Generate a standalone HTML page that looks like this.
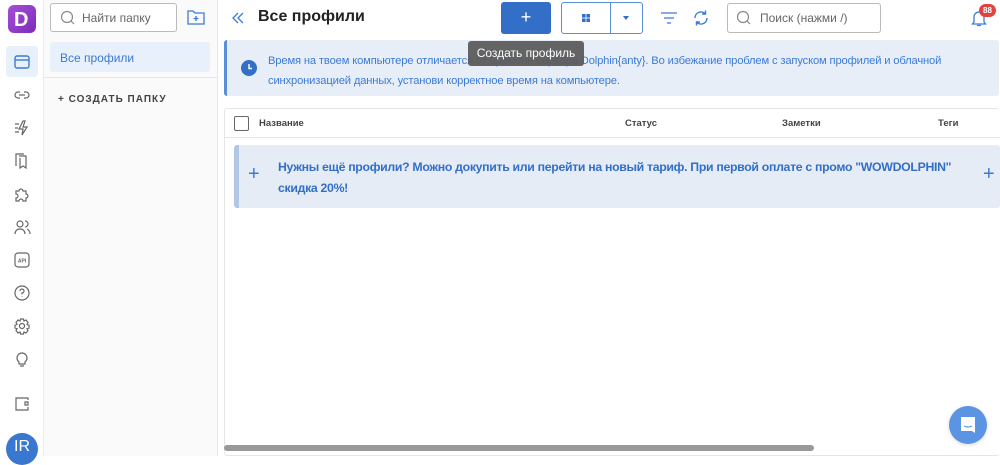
<!DOCTYPE html>
<html><head><meta charset="utf-8"><style>
*{box-sizing:border-box;margin:0;padding:0}
body{width:1000px;height:456px;overflow:hidden;background:#fff;font-family:"Liberation Sans",sans-serif;position:relative;color:#222}
.abs{position:absolute}
.rail{left:0;top:0;width:44px;height:456px;background:#fff;border-right:1px solid #ececec}
.ic{position:absolute;left:12px;width:20px;height:20px}
.panel{left:44px;top:0;width:174px;height:456px;background:#fafafa;border-right:1px solid #e8e8e8}
svg{display:block}
</style></head><body>
<div class="abs rail">
  <div class="abs" style="left:8px;top:5px;width:28px;height:28px;border-radius:6px;background:linear-gradient(135deg,#a64fd8,#7d2cb8)"></div>
  <div class="abs" style="left:14px;top:9px;color:#fff;font-weight:bold;font-size:20px">D</div>
  <div class="abs" style="left:6px;top:46px;width:32px;height:31px;border-radius:4px;background:#e8f0fb"></div>
  <svg class="ic" style="top:52px" viewBox="0 0 20 20"><rect x="3" y="4" width="14" height="12" rx="2" fill="none" stroke="#3b7bd8" stroke-width="1.4"/><line x1="3" y1="8" x2="17" y2="8" stroke="#3b7bd8" stroke-width="1.4"/></svg>
  <svg class="ic" style="top:85px" viewBox="0 0 20 20" fill="none" stroke="#666" stroke-width="1.2"><path d="M8 7H6a3 3 0 0 0 0 6h2M12 7h2a3 3 0 0 1 0 6h-2M7 10h6"/></svg>
  <svg class="ic" style="top:118px" viewBox="0 0 20 20" fill="none" stroke="#666" stroke-width="1.2"><path d="M11 3l-4 8h4l-1 6 5-8h-4l2-6zM3 6h4M3 10h3M3 14h4"/></svg>
  <svg class="ic" style="top:151px" viewBox="0 0 20 20" fill="none" stroke="#666" stroke-width="1.2"><path d="M7 5h7v12l-3-2-3 2V7M4 15V3h8"/></svg>
  <svg class="ic" style="top:184px" viewBox="0 0 20 20" fill="none" stroke="#666" stroke-width="1.2"><path d="M4 7h3a2 2 0 1 1 4 0h3v3a2 2 0 1 1 0 4v3h-3a2 2 0 1 0-4 0H4v-3a2 2 0 1 0 0-4z"/></svg>
  <svg class="ic" style="top:217px" viewBox="0 0 20 20" fill="none" stroke="#666" stroke-width="1.2"><circle cx="8" cy="7" r="3"/><path d="M3 17c0-3 2-5 5-5s5 2 5 5M13 4a3 3 0 0 1 0 6M15 12c2 1 3 3 3 5"/></svg>
  <svg class="ic" style="top:250px" viewBox="0 0 20 20" fill="none" stroke="#666" stroke-width="1.2"><rect x="3" y="3" width="14" height="14" rx="3"/><text x="10" y="12.5" font-size="5" text-anchor="middle" fill="#666" stroke="none" font-family="Liberation Sans" font-weight="bold">API</text></svg>
  <svg class="ic" style="top:283px" viewBox="0 0 20 20" fill="none" stroke="#666" stroke-width="1.2"><circle cx="10" cy="10" r="7"/><path d="M8 8a2 2 0 1 1 2 2v1.5M10 13.5v.5"/></svg>
  <svg class="ic" style="top:316px" viewBox="0 0 20 20" fill="none" stroke="#666" stroke-width="1.2"><circle cx="10" cy="10" r="2.5"/><path d="M8.5 3h3l.5 2 2-1 2 2.5-1 2 2 .5v3l-2 .5 1 2-2 2.5-2-1-.5 2h-3l-.5-2-2 1-2-2.5 1-2-2-.5v-3l2-.5-1-2L6 4l2 1z"/></svg>
  <svg class="ic" style="top:349px" viewBox="0 0 20 20" fill="none" stroke="#666" stroke-width="1.2"><path d="M7 13a5 5 0 1 1 6 0v2H7zM8 17h4"/></svg>
  <svg class="ic" style="top:394px" viewBox="0 0 20 20" fill="none" stroke="#666" stroke-width="1.2"><path d="M16 6V4H4v12h12v-3M16 8h-3v3h3z"/></svg>
  <div class="abs" style="left:6px;top:433px;width:32px;height:32px;border-radius:50%;background:#3a77d0;color:#fff;font-size:16px;text-align:center;line-height:28px">IR</div>
</div>
<div class="abs panel">
  <div class="abs" style="left:6px;top:3px;width:127px;height:29px;border:1px solid #bbb;border-radius:3px;background:#fff"></div>
  <svg class="abs" style="left:16px;top:10px" width="16" height="16" viewBox="0 0 16 16" fill="none" stroke="#888" stroke-width="1.2"><circle cx="7" cy="7" r="5.5"/><path d="M11 11l3 3"/></svg>
  <div class="abs" style="left:38px;top:11px;font-size:12px;color:#666">Найти папку</div>
  <svg class="abs" style="left:143px;top:9px" width="18" height="16" viewBox="0 0 18 16" fill="none" stroke="#3b7bd8" stroke-width="1.3"><path d="M1 2h5l2 2h9v11H1z M9 7v5M6.5 9.5h5"/></svg>
  <div class="abs" style="left:6px;top:42px;width:160px;height:30px;border-radius:3px;background:#e8f0fb"></div>
  <div class="abs" style="left:16px;top:51px;font-size:12px;color:#3b7bd8">Все профили</div>
  <div class="abs" style="left:0;top:77px;width:173px;height:1px;background:#e6e6e6"></div>
  <div class="abs" style="left:14px;top:94px;font-size:10px;color:#444;letter-spacing:1px;font-weight:bold">+ СОЗДАТЬ ПАПКУ</div>
</div>
<!-- header -->
<svg class="abs" style="left:230px;top:10px" width="16" height="16" viewBox="0 0 16 16" fill="none" stroke="#3b7bd8" stroke-width="1.3"><path d="M8 3L3 8l5 5M13 3L8 8l5 5"/></svg>
<div class="abs" style="left:258px;top:8px;font-size:16px;font-weight:bold;color:#222">Все профили</div>
<div class="abs" style="left:501px;top:2px;width:50px;height:32px;background:#336fc7;border-radius:3px;color:#fff;text-align:center;line-height:30px;font-size:18px">+</div>
<div class="abs" style="left:561px;top:2px;width:82px;height:32px;border:1px solid #5a8fd8;border-radius:3px"></div>
<div class="abs" style="left:610px;top:3px;width:1px;height:30px;background:#5a8fd8"></div>
<svg class="abs" style="left:582px;top:14px" width="8" height="8" viewBox="0 0 10 10" fill="#336fc7"><rect x="0" y="0" width="4.5" height="4.5"/><rect x="5.5" y="0" width="4.5" height="4.5"/><rect x="0" y="5.5" width="4.5" height="4.5"/><rect x="5.5" y="5.5" width="4.5" height="4.5"/></svg>
<svg class="abs" style="left:623px;top:16px" width="6" height="4"><path d="M0 0h6L3 4z" fill="#336fc7"/></svg>
<svg class="abs" style="left:660px;top:10px" width="18" height="16" viewBox="0 0 18 16" stroke="#3b7bd8" stroke-width="1.3"><path d="M1 3h16M4 8h10M7 13h4"/></svg>
<svg class="abs" style="left:692px;top:9px" width="18" height="18" viewBox="0 0 18 18" fill="none" stroke="#3b7bd8" stroke-width="1.4"><path d="M3 9a6 6 0 0 1 10.5-4M15 9a6 6 0 0 1-10.5 4M13.5 1.5v3.5H10M4.5 16.5V13H8"/></svg>
<div class="abs" style="left:727px;top:3px;width:154px;height:30px;border:1px solid #bbb;border-radius:3px"></div>
<svg class="abs" style="left:736px;top:10px" width="16" height="16" viewBox="0 0 16 16" fill="none" stroke="#888" stroke-width="1.2"><circle cx="7" cy="7" r="5.5"/><path d="M11 11l3 3"/></svg>
<div class="abs" style="left:760px;top:11px;font-size:12px;color:#666">Поиск (нажми /)</div>
<svg class="abs" style="left:970px;top:9px" width="18" height="18" viewBox="0 0 18 18" fill="none" stroke="#3b7bd8" stroke-width="1.3"><path d="M4 13V8a5 5 0 0 1 10 0v5l1.5 2h-13zM7 16.5h4"/></svg>
<div class="abs" style="left:979px;top:4px;width:17px;height:13px;border-radius:7px;background:#e14343;color:#fff;font-size:8px;font-weight:bold;text-align:center;line-height:13px">88</div>
<!-- alert -->
<div class="abs" style="left:224px;top:40px;width:775px;height:56px;background:#e8eef8;border-left:3px solid #5a8fd8;border-radius:3px"></div>
<svg class="abs" style="left:241px;top:60px" width="16" height="16" viewBox="0 0 16 16"><circle cx="8" cy="8" r="8" fill="#336fc7"/><path d="M8 4v4.5h3" stroke="#fff" stroke-width="1.4" fill="none"/></svg>
<div class="abs" style="left:268px;top:51px;font-size:11.2px;color:#3b7bd8;line-height:20px;letter-spacing:-0.15px">Время на твоем компьютере отличается от времени сервера Dolphin{anty}. Во избежание проблем с запуском профилей и облачной<br>синхронизацией данных, установи корректное время на компьютере.</div>
<div class="abs" style="left:468px;top:41px;width:116px;height:25px;background:#5c5c5c;border-radius:3px;color:#fff;font-size:12px;text-align:center;line-height:25px;opacity:.95">Создать профиль</div>
<!-- table -->
<div class="abs" style="left:224px;top:108px;width:776px;height:348px;border:1px solid #e5e5e5;border-right:none;border-radius:3px"></div>
<div class="abs" style="left:225px;top:137px;width:775px;height:1px;background:#e5e5e5"></div>
<div class="abs" style="left:234px;top:116px;width:15px;height:15px;border:1.5px solid #666;border-radius:2px"></div>
<div class="abs" style="left:259px;top:118px;font-size:9.5px;font-weight:bold;color:#444">Название</div>
<div class="abs" style="left:625px;top:118px;font-size:9.5px;font-weight:bold;color:#444">Статус</div>
<div class="abs" style="left:782px;top:118px;font-size:9.5px;font-weight:bold;color:#444">Заметки</div>
<div class="abs" style="left:938px;top:118px;font-size:9.5px;font-weight:bold;color:#444">Теги</div>
<div class="abs" style="left:234px;top:145px;width:766px;height:63px;background:#e6ecf6;border-left:5px solid #b2c7e8;border-radius:3px"></div>
<div class="abs" style="left:248px;top:163px;font-size:20px;color:#3b7bd8">+</div>
<div class="abs" style="left:983px;top:163px;font-size:20px;color:#3b7bd8">+</div>
<div class="abs" style="left:278px;top:157px;font-size:12.3px;font-weight:bold;color:#336fc7;line-height:21px;letter-spacing:-0.32px">Нужны ещё профили? Можно докупить или перейти на новый тариф. При первой оплате с промо "WOWDOLPHIN"<br>скидка 20%!</div>
<div class="abs" style="left:224px;top:445px;width:590px;height:6px;border-radius:3px;background:#999"></div>
<div class="abs" style="left:949px;top:406px;width:38px;height:38px;border-radius:50%;background:#5b94e3;box-shadow:0 1px 4px rgba(0,0,0,.15)"></div>
<svg class="abs" style="left:958px;top:415px" width="20" height="20" viewBox="0 0 20 20"><path d="M3 2h14v16l-3-2H3z" fill="#fff"/><path d="M6 11q4 2 8 0" stroke="#5b94e3" stroke-width="1.2" fill="none"/></svg>
</body></html>
